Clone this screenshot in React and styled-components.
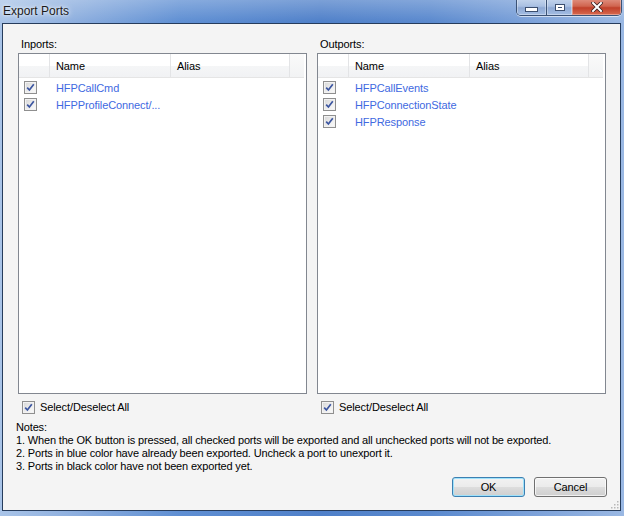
import React from 'react'
import styled, { createGlobalStyle } from 'styled-components'

const GlobalStyle = createGlobalStyle`
  html, body { margin: 0; padding: 0; }
  body {
    width: 624px;
    height: 516px;
    overflow: hidden;
    font-family: "Liberation Sans", Arial, sans-serif;
    font-size: 11px;
    letter-spacing: -0.1px;
    color: #000;
  }
`

const inports = ['HFPCallCmd', 'HFPProfileConnect/...']
const outports = ['HFPCallEvents', 'HFPConnectionState', 'HFPResponse']

const CheckMark = () => (
  <svg width="9" height="9" viewBox="0 0 9 9">
    <path d="M1.2 4.6 L3.4 7 L7.8 1.2" fill="none" stroke="#3b55a0" strokeWidth="1.7" />
  </svg>
)

const Check = () => (
  <CheckBox>
    <CheckMark />
  </CheckBox>
)

const App = () => {
  return (
    <>
      <GlobalStyle />
      <Window>
        <TitleBar>
          <Title>Export Ports</Title>
          <Controls>
            <CtrlButton $w={29}>
              <MinGlyph />
            </CtrlButton>
            <CtrlButton $w={26}>
              <MaxGlyph />
            </CtrlButton>
            <CtrlButton $w={49} $close>
              <svg width="12" height="10" viewBox="0 0 12 10">
                <path d="M2 1 L10 9 M10 1 L2 9" stroke="#3a2222" strokeWidth="3.6" strokeLinecap="square" />
                <path d="M2 1 L10 9 M10 1 L2 9" stroke="#fff" strokeWidth="2" strokeLinecap="square" />
              </svg>
            </CtrlButton>
          </Controls>
        </TitleBar>
        <Client>
          <Panels>
            <PortPanel label="Inports:" ports={inports} />
            <PortPanel label="Outports:" ports={outports} />
          </Panels>
          <Notes>
            <div>Notes:</div>
            <div>1. When the OK button is pressed, all checked ports will be exported and all unchecked ports will not be exported.</div>
            <div>2. Ports in blue color have already been exported. Uncheck a port to unexport it.</div>
            <div>3. Ports in black color have not been exported yet.</div>
          </Notes>
          <ButtonRow>
            <Button $default>OK</Button>
            <Button>Cancel</Button>
          </ButtonRow>
          <Grip>
            <svg width="10" height="10" viewBox="0 0 10 10">
              {[[8, 2], [8, 5], [8, 8], [5, 5], [5, 8], [2, 8]].map(([x, y]) => (
                <rect key={x + '-' + y} x={x} y={y} width="1.5" height="1.5" fill="#b8b8b8" />
              ))}
            </svg>
          </Grip>
        </Client>
      </Window>
    </>
  )
}

const PortPanel = ({ label, ports }) => (
  <Column>
    <Label>{label}</Label>
    <List>
      <Header>
        <HeadCell $w={31} />
        <HeadCell $w={121}>Name</HeadCell>
        <HeadCell $w={119}>Alias</HeadCell>
        <HeadRest />
      </Header>
      <Rows>
        {ports.map(p => (
          <Row key={p}>
            <CheckCell>
              <Check />
            </CheckCell>
            <NameCell>{p}</NameCell>
          </Row>
        ))}
      </Rows>
    </List>
    <SelectAll>
      <Check />
      <span>Select/Deselect All</span>
    </SelectAll>
  </Column>
)

const Window = styled.div`
  width: 624px;
  height: 516px;
  display: flex;
  flex-direction: column;
  box-sizing: border-box;
  background:
    linear-gradient(180deg, rgba(255,255,255,0.25) 0px, rgba(255,255,255,0) 22px),
    linear-gradient(90deg, #a9c4e8 0px, #8fb0df 70px, #5f8fd3 180px, #4f80c9 320px, #5a89ce 430px, #7ea3da 540px, #9ab8e3 624px);
`

const TitleBar = styled.div`
  height: 23px;
  display: flex;
  justify-content: space-between;
  align-items: flex-start;
  padding-left: 3px;
`

const Title = styled.div`
  font-size: 12px;
  letter-spacing: 0;
  line-height: 23px;
  color: #1a1a1a;
  text-shadow: 0 0 6px rgba(255,255,255,0.9), 0 0 3px rgba(255,255,255,0.8);
`

const Controls = styled.div`
  display: flex;
  margin-right: 2px;
  margin-top: -1px;
  height: 16px;
  border: 1px solid #3b5275;
  border-top: none;
  border-radius: 0 0 5px 5px;
  overflow: hidden;
  box-shadow: 0 1px 0 rgba(255,255,255,0.6);
`

const CtrlButton = styled.div`
  width: ${p => p.$w}px;
  display: flex;
  align-items: center;
  justify-content: center;
  box-sizing: border-box;
  border-left: ${p => (p.$close ? 'none' : '1px solid #3b5275')};
  &:first-child { border-left: none; }
  background: ${p =>
    p.$close
      ? 'linear-gradient(180deg, #e09080 0%, #d0654f 45%, #c0402a 55%, #d86a50 100%)'
      : 'linear-gradient(180deg, #c4d5ed 0%, #a9c0e2 45%, #8ea9d4 55%, #a3bde3 100%)'};
  box-shadow: inset 0 0 0 1px rgba(255,255,255,0.35);
`

const MinGlyph = styled.span`
  width: 11px;
  height: 3px;
  margin-top: 4px;
  background: #fff;
  border: 1px solid #3b4e6e;
`

const MaxGlyph = styled.span`
  width: 8px;
  height: 5px;
  border: 1px solid #3b4e6e;
  box-shadow: inset 0 0 0 2px #fff, inset 0 0 0 3px #3b4e6e;
  background: #fff;
`

const Client = styled.div`
  position: relative;
  flex: 1;
  margin: 0 3px 5px 2px;
  border: 1px solid #263c5c;
  background: #f4f4f4;
  display: flex;
  flex-direction: column;
  padding: 14px 13px 0 13px;
`

const Panels = styled.div`
  display: grid;
  grid-template-columns: 289px 289px;
  column-gap: 10px;
  padding-left: 2px;
`

const Column = styled.div`
  display: flex;
  flex-direction: column;
`

const Label = styled.div`
  line-height: 13px;
  padding-left: 3px;
  margin-bottom: 2px;
`

const List = styled.div`
  height: 341px;
  box-sizing: border-box;
  border: 1px solid #828790;
  background: #fff;
  display: flex;
  flex-direction: column;
`

const Header = styled.div`
  height: 24px;
  box-sizing: border-box;
  display: flex;
  border-bottom: 1px solid #e5e5e5;
  background: linear-gradient(180deg, #ffffff 0%, #ffffff 50%, #f5f6f7 51%, #f1f2f4 100%);
  margin-right: 2px;
`

const HeadCell = styled.div`
  width: ${p => p.$w}px;
  box-sizing: border-box;
  border-right: 1px solid #e3e4e6;
  padding: 2px 0 0 6px;
  line-height: 21px;
`

const HeadRest = styled.div`
  flex: 1;
  background: linear-gradient(180deg, #fafafa 0%, #f2f3f4 100%);
`

const Rows = styled.div`
  padding-top: 1px;
`

const Row = styled.div`
  height: 17px;
  display: flex;
  align-items: center;
`

const CheckCell = styled.div`
  width: 31px;
  padding-left: 5px;
  box-sizing: border-box;
  display: flex;
`

const NameCell = styled.div`
  padding-left: 6px;
  color: #4169e1;
  white-space: nowrap;
`

const CheckBox = styled.span`
  width: 13px;
  height: 13px;
  box-sizing: border-box;
  border: 1px solid #8f8f8f;
  background: linear-gradient(135deg, #d6d6d6 0%, #efefef 60%, #fbfbfb 100%);
  box-shadow: inset 0 0 0 1px #f2f2f2;
  display: inline-flex;
  align-items: center;
  justify-content: center;
  flex-shrink: 0;
`

const SelectAll = styled.div`
  display: flex;
  align-items: center;
  height: 13px;
  margin-top: 7px;
  padding-left: 4px;
  gap: 5px;
  line-height: 13px;
`

const Notes = styled.div`
  margin-top: 7px;
  line-height: 13px;
  letter-spacing: -0.16px;
  white-space: nowrap;
`

const ButtonRow = styled.div`
  display: flex;
  justify-content: flex-end;
  gap: 9px;
  margin-top: 4px;
`

const Button = styled.div`
  width: 73px;
  height: 20px;
  box-sizing: border-box;
  border: 1px solid ${p => (p.$default ? '#3c7fb1' : '#707070')};
  border-radius: 3px;
  background: linear-gradient(180deg, #f2f2f2 0%, #ebebeb 50%, #dddddd 51%, #cfcfcf 100%);
  box-shadow: inset 0 0 0 1px ${p => (p.$default ? '#9fe2fb' : 'rgba(255,255,255,0.7)')};
  display: flex;
  align-items: center;
  justify-content: center;
  font-size: 11px;
`

const Grip = styled.div`
  position: absolute;
  right: 1px;
  bottom: 1px;
  width: 10px;
  height: 10px;
`

export default App
